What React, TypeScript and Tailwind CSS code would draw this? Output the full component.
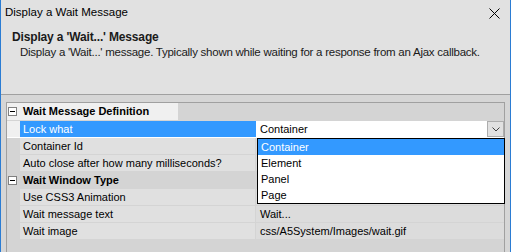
const font = { fontFamily: '"Liberation Sans", Arial, sans-serif' };

function Minus() {
  return (
    <div className="ml-px w-[9px] h-[9px] border border-[#808080] bg-white flex items-center justify-center">
      <div className="w-[5px] h-px bg-black" />
    </div>
  );
}

function Category({ title, first = false }: { title: string; first?: boolean }) {
  return (
    <div className={`flex border-b border-[#d4d4d4] ${first ? "h-[18px]" : "h-[17px]"}`}>
      <div className={`flex items-center h-full ${first ? "w-[171px] bg-[#f0f0f0]" : "flex-1 bg-[#d4d4d4]"}`}>
        <div className="w-[13px] flex items-center">
          <Minus />
        </div>
        <span className="pl-[3px] font-bold text-[11px] text-black">{title}</span>
      </div>
      {first && <div className="flex-1 bg-[#d4d4d4]" />}
    </div>
  );
}

function Row({ name, value = "" }: { name: string; value?: string }) {
  return (
    <div className="flex h-[17px]">
      <div className="w-[13px] bg-[#d4d4d4]" />
      <div className="w-[236px] border-b border-r border-[#d4d4d4] bg-[#e0e0e0] pl-[3px] flex items-center text-[11px] text-black">
        {name}
      </div>
      <div className="flex-1 border-b border-[#d4d4d4] bg-[#dcdcdc] pl-[4px] flex items-center text-[11px] text-black">
        {value}
      </div>
    </div>
  );
}

export default function App() {
  const options = ["Container", "Element", "Panel", "Page"];
  return (
    <div
      className="w-[511px] h-[252px] overflow-hidden bg-[#e1e1e1] border-x border-[#2b7cd3] flex flex-col"
      style={font}
    >
      {/* title bar */}
      <div className="h-[26px] flex items-center justify-between pl-1 pr-[10px] shrink-0">
        <span className="text-[11.5px] text-black">Display a Wait Message</span>
        <svg width="11" height="11" viewBox="0 0 11 11">
          <path d="M0.5 0.5 L10.5 10.5 M10.5 0.5 L0.5 10.5" stroke="#000" strokeWidth="1" />
        </svg>
      </div>

      {/* header */}
      <div className="pl-[11px] pt-[3px] h-[68px] shrink-0">
        <div className="h-4 flex items-center font-bold text-[12px] text-[#1a1a1a] tracking-[-0.15px]">
          Display a 'Wait...' Message
        </div>
        <div className="h-4 flex items-center pl-2 text-[11.5px] text-[#1a1a1a] tracking-[-0.25px]">
          Display a 'Wait...' message. Typically shown while waiting for a response from an Ajax callback.
        </div>
      </div>
      <div className="h-px bg-[#a0a0a0] shrink-0" />

      {/* property grid */}
      <div className="flex-1 bg-[#d6d6d6] px-[5px] pt-[7px]">
        <div className="relative h-[200px] border-x border-t border-[#a0a0a0] bg-[#d4d4d4]">
          <Category title="Wait Message Definition" first />
          <div className="flex h-[17px] border-b border-white">
            <div className="w-[13px] bg-[#f0f0f0]" />
            <div className="w-[236px] bg-[#3399ff] text-white pl-[3px] flex items-center text-[11px]">
              Lock what
            </div>
            <div className="flex-1 bg-white flex items-center justify-between pl-[4px] text-[11px] text-black">
              <span>Container</span>
              <div className="w-[17px] h-[16px] border border-[#adadad] bg-[#e1e1e1] flex items-center justify-center">
                <svg width="8" height="5" viewBox="0 0 8 5">
                  <path d="M0.5 0.5 L4 4 L7.5 0.5" stroke="#404040" strokeWidth="1" fill="none" />
                </svg>
              </div>
            </div>
          </div>
          <Row name="Container Id" />
          <Row name="Auto close after how many milliseconds?" />
          <Category title="Wait Window Type" />
          <Row name="Use CSS3 Animation" />
          <Row name="Wait message text" value="Wait..." />
          <Row name="Wait image" value="css/A5System/Images/wait.gif" />

          {/* open dropdown */}
          <div className="absolute left-[250px] top-[35px] w-[248px] border border-black bg-white text-[11px]">
            {options.map((o, i) => (
              <div
                key={o}
                className={`h-4 flex items-center pl-[3px] ${i === 0 ? "bg-[#3399ff] text-white" : "text-black"}`}
              >
                {o}
              </div>
            ))}
          </div>
        </div>
      </div>
    </div>
  );
}
